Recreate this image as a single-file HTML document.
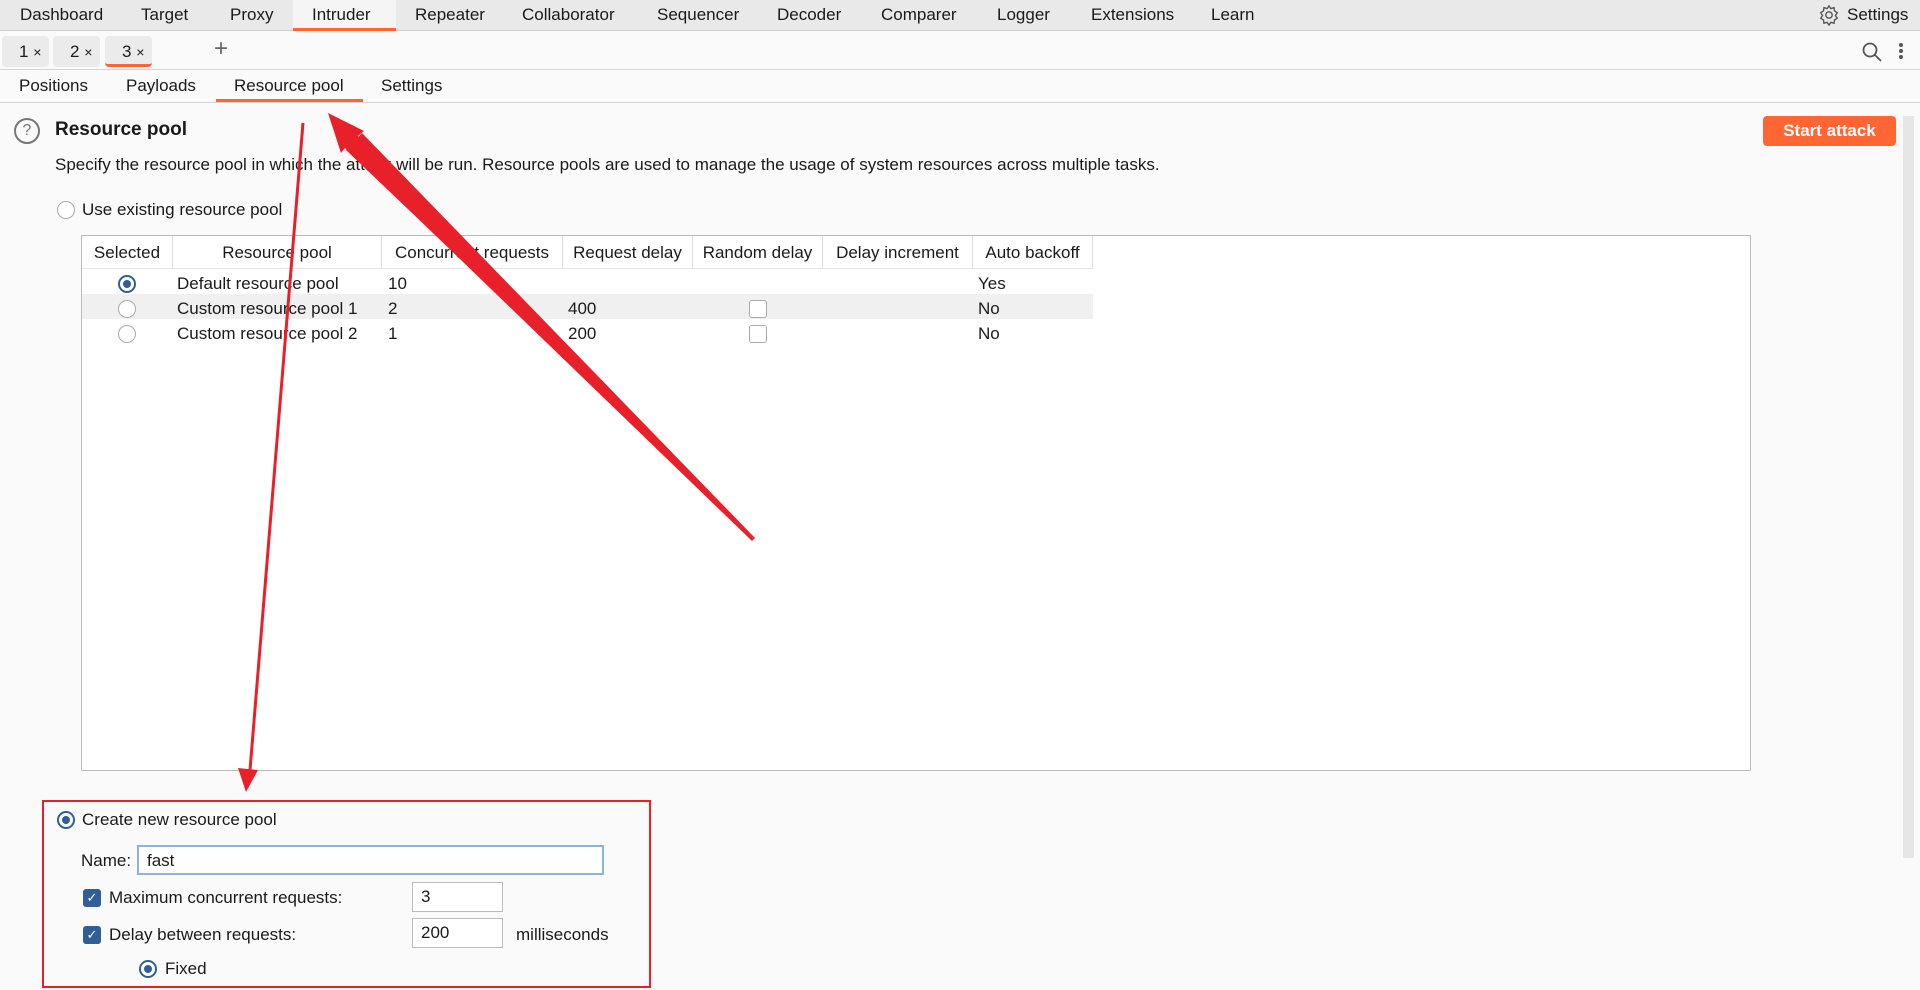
<!DOCTYPE html>
<html><head><meta charset="utf-8"><style>
*{margin:0;padding:0;box-sizing:border-box}
body{width:1920px;height:990px;background:#fafafa;font-family:"Liberation Sans",sans-serif;font-size:17px;color:#1a1a1a;position:relative;overflow:hidden;line-height:26px}
.a{position:absolute;white-space:nowrap}
.nav{position:absolute;left:0;top:0;width:1920px;height:31px;background:#e9e9e9;border-bottom:1px solid #cfcfcf}
.nav span{position:absolute;top:2px}
.rad{position:absolute;width:18px;height:18px;border-radius:50%;border:1px solid #aaa;background:#fff;margin-top:4px}
.rad.on{border:2px solid #2f5f96}
.rad.on::after{content:"";position:absolute;left:3px;top:3px;width:8px;height:8px;border-radius:50%;background:#2f5f96}
.chk{position:absolute;width:18px;height:18px;border-radius:3px;background:#2f5f96;color:#fff;font-size:13px;text-align:center;line-height:18px;margin-top:4px}
.cb{position:absolute;width:18px;height:18px;border-radius:3px;border:1px solid #aaa;background:#fff;margin-top:4px}
.inp{position:absolute;background:#fff;border:1px solid #bbb;padding-left:8px;line-height:28px}
.th{position:absolute;top:0;height:32px;border-right:1px solid #ddd;line-height:34px;text-align:center}
</style></head><body>
<div class="nav">
<span style="left:20px">Dashboard</span><span style="left:141px">Target</span><span style="left:230px">Proxy</span>
<div class="a" style="left:293px;top:0;width:103px;height:31px;background:#f5f5f5;border-bottom:3px solid #ff6633"></div>
<span style="left:312px">Intruder</span><span style="left:415px">Repeater</span><span style="left:522px">Collaborator</span><span style="left:657px">Sequencer</span><span style="left:777px">Decoder</span><span style="left:881px">Comparer</span><span style="left:997px">Logger</span><span style="left:1091px">Extensions</span><span style="left:1211px">Learn</span>
<svg class="a" style="left:1818px;top:4px" width="22" height="22" viewBox="0 0 24 24" fill="none" stroke="#555" stroke-width="1.5"><circle cx="12" cy="12" r="3.5"/><path d="M12 2l2 3 3.5-1 .5 3.5 3 2-2 3 2 3-3 2-.5 3.5-3.5-1-2 3-2-3-3.5 1-.5-3.5-3-2 2-3-2-3 3-2 .5-3.5 3.5 1z"/></svg>
<span style="left:1847px">Settings</span>
</div>
<div class="a" style="left:0;top:31px;width:1920px;height:39px;border-bottom:1px solid #d5d5d5"></div>
<div class="a" style="left:2px;top:36px;width:47px;height:31px;background:#ebebeb;border-radius:4px;padding:3px 0 0 17px">1 <small>×</small></div>
<div class="a" style="left:53px;top:36px;width:47px;height:31px;background:#ebebeb;border-radius:4px;padding:3px 0 0 17px">2 <small>×</small></div>
<div class="a" style="left:105px;top:36px;width:47px;height:31px;background:#ebebeb;border-radius:4px;padding:3px 0 0 17px;border-bottom:3px solid #ff6633">3 <small>×</small></div>
<div class="a" style="left:214px;top:36px;font-size:24px;color:#666">+</div>
<svg class="a" style="left:1861px;top:41px" width="22" height="22" viewBox="0 0 22 22" fill="none" stroke="#555" stroke-width="1.8"><circle cx="9" cy="9" r="6.5"/><path d="M14 14l6 6"/></svg>
<div class="a" style="left:1899px;top:43px;width:4px;height:4px;border-radius:2px;background:#555;box-shadow:0 6px 0 #555,0 12px 0 #555"></div>
<div class="a" style="left:0;top:70px;width:1920px;height:33px;border-bottom:1px solid #d5d5d5"></div>
<div class="a" style="left:19px;top:73px">Positions</div><div class="a" style="left:126px;top:73px">Payloads</div>
<div class="a" style="left:234px;top:73px">Resource pool</div><div class="a" style="left:381px;top:73px">Settings</div>
<div class="a" style="left:216px;top:99px;width:147px;height:3px;background:#ff6633"></div>
<div class="a" style="left:14px;top:118px;width:26px;height:26px;border:2px solid #777;border-radius:50%;text-align:center;line-height:22px;color:#777;font-size:16px">?</div>
<div class="a" style="left:55px;top:117px;font-weight:bold;font-size:19px">Resource pool</div>
<div class="a" style="left:55px;top:152px">Specify the resource pool in which the attack will be run. Resource pools are used to manage the usage of system resources across multiple tasks.</div>
<div class="a" style="left:1763px;top:116px;width:133px;height:30px;background:#ff6633;border-radius:4px;color:#fff;font-weight:bold;text-align:center;line-height:30px">Start attack</div>
<div class="a" style="left:1903px;top:116px;width:11px;height:742px;background:#e6e6e6"></div>
<div class="rad" style="left:57px;top:197px"></div><div class="a" style="left:82px;top:197px">Use existing resource pool</div>
<div class="a" style="left:81px;top:235px;width:1670px;height:536px;border:1px solid #bbb;background:#fff">
<div class="a" style="left:0;top:32px;width:1011px;height:1px;background:#e5e5e5"></div>
<div class="th" style="left:0;width:91px">Selected</div>
<div class="th" style="left:91px;width:209px">Resource pool</div>
<div class="th" style="left:300px;width:181px">Concurrent requests</div>
<div class="th" style="left:481px;width:130px">Request delay</div>
<div class="th" style="left:611px;width:130px">Random delay</div>
<div class="th" style="left:741px;width:150px">Delay increment</div>
<div class="th" style="left:891px;width:120px">Auto backoff</div>
<div class="a" style="left:0;top:58px;width:1011px;height:25px;background:#f0f0f0"></div>
<div class="rad on" style="left:36px;top:35px"></div><div class="a" style="left:95px;top:35px">Default resource pool</div><div class="a" style="left:306px;top:35px">10</div><div class="a" style="left:896px;top:35px">Yes</div>
<div class="rad" style="left:36px;top:60px"></div><div class="a" style="left:95px;top:60px">Custom resource pool 1</div><div class="a" style="left:306px;top:60px">2</div><div class="a" style="left:486px;top:60px">400</div><div class="cb" style="left:667px;top:60px"></div><div class="a" style="left:896px;top:60px">No</div>
<div class="rad" style="left:36px;top:85px"></div><div class="a" style="left:95px;top:85px">Custom resource pool 2</div><div class="a" style="left:306px;top:85px">1</div><div class="a" style="left:486px;top:85px">200</div><div class="cb" style="left:667px;top:85px"></div><div class="a" style="left:896px;top:85px">No</div>
</div>
<div class="a" style="left:42px;top:800px;width:609px;height:188px;border:2px solid #e8202a"></div>
<div class="rad on" style="left:57px;top:807px"></div><div class="a" style="left:82px;top:807px">Create new resource pool</div>
<div class="a" style="left:81px;top:848px">Name:</div>
<div class="inp" style="left:137px;top:845px;width:467px;height:30px;border:2px solid #8fb4dc">fast</div>
<div class="chk" style="left:83px;top:885px">✓</div><div class="a" style="left:109px;top:885px">Maximum concurrent requests:</div>
<div class="inp" style="left:412px;top:882px;width:91px;height:30px">3</div>
<div class="chk" style="left:83px;top:922px">✓</div><div class="a" style="left:109px;top:922px">Delay between requests:</div>
<div class="inp" style="left:412px;top:918px;width:91px;height:30px">200</div>
<div class="a" style="left:516px;top:922px">milliseconds</div>
<div class="rad on" style="left:139px;top:956px"></div><div class="a" style="left:165px;top:956px">Fixed</div>
<svg class="a" style="left:0;top:0" width="1920" height="990"><g fill="#e8202a" stroke="#e8202a">
<line x1="303" y1="123" x2="250" y2="770" stroke-width="3"/><polygon points="238,768 258,770 246,792" stroke="none"/>
<polygon points="754,539 752,541 345,148 341,153 328,113 364,131 358,136" stroke="none"/>
<polygon points="754,539 755,538 362,133 346,150" stroke="none"/>
</g></svg>
</body></html>
